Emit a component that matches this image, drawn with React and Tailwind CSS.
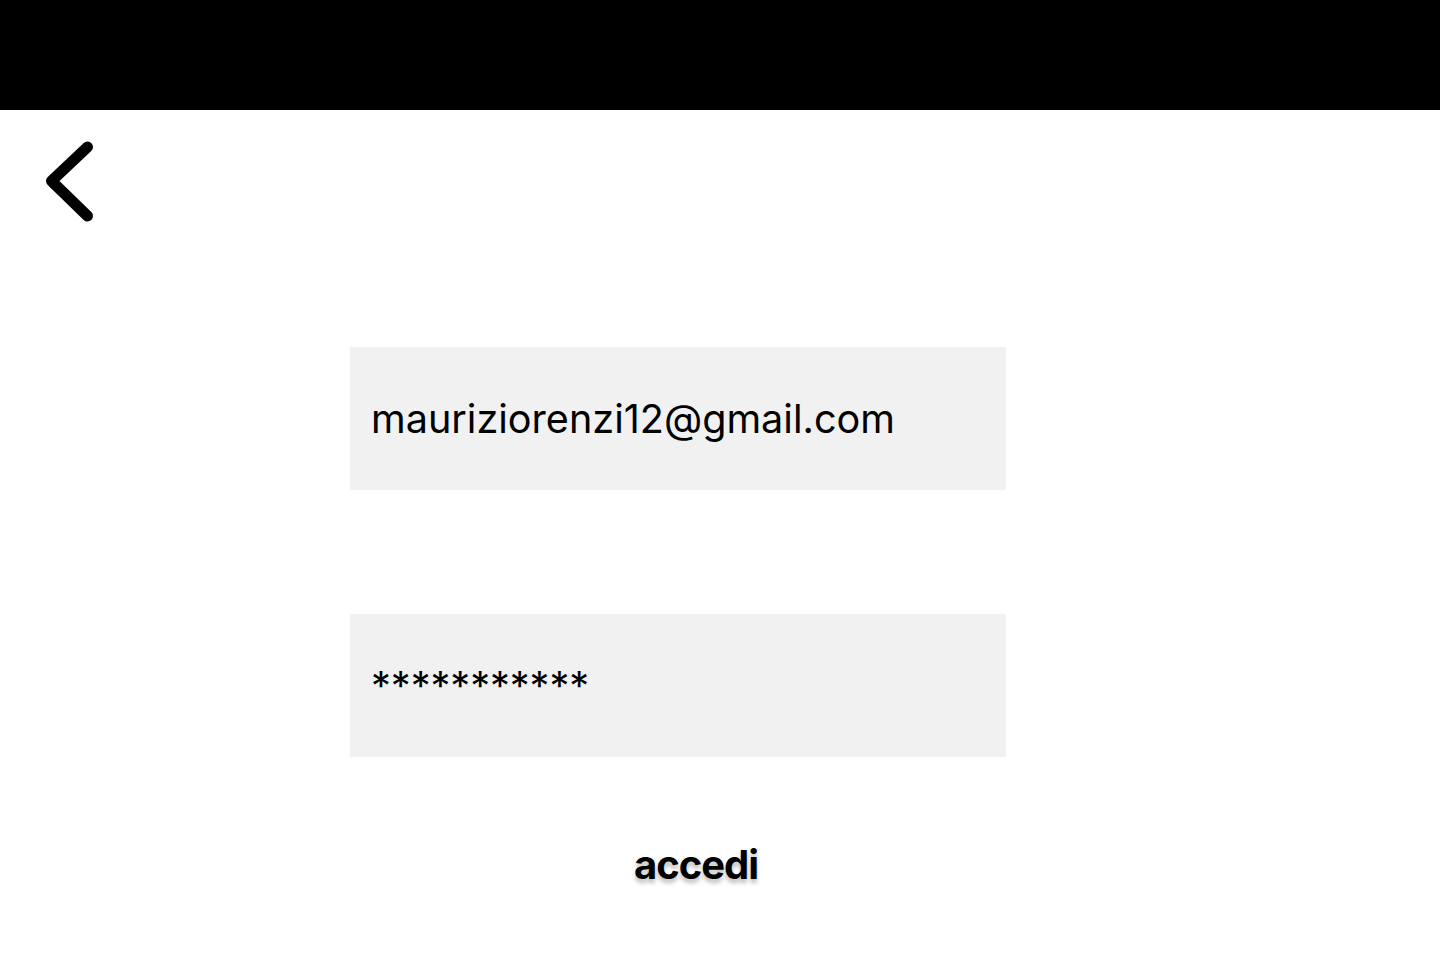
export default function App() {
  return (
    <div className="min-h-screen bg-white" style={{ fontFamily: "Inter, sans-serif" }}>
      <header className="h-[110px] bg-black" />
      <div className="pl-[45px] pt-[31px]">
        <button className="block h-[81px] w-[49px]">
          <svg viewBox="0 0 49 81" className="h-[81px] w-[49px]" fill="none">
            <path d="M42.5 6 L6.5 40 L42.5 75" stroke="black" strokeWidth="11" strokeLinecap="round" strokeLinejoin="round" />
          </svg>
        </button>
      </div>
      <div className="ml-[350px] mt-[125px] flex w-[656px] flex-col gap-[124px]">
        <div className="flex h-[143px] items-center bg-[#f1f1f1] pl-[21px] pt-[3px] text-[39.6px] text-black">
          mauriziorenzi12@gmail.com
        </div>
        <div className="flex h-[143px] items-center bg-[#f1f1f1] pl-[21px] pt-[3px] text-[39.6px] text-black">
          ***********
        </div>
      </div>
      <div className="mt-[78px] pl-[634px]">
        <button className="text-[40px] font-bold tracking-[-1px] text-black [text-shadow:0_4px_4px_rgba(0,0,0,0.25)]">
          accedi
        </button>
      </div>
    </div>
  );
}
